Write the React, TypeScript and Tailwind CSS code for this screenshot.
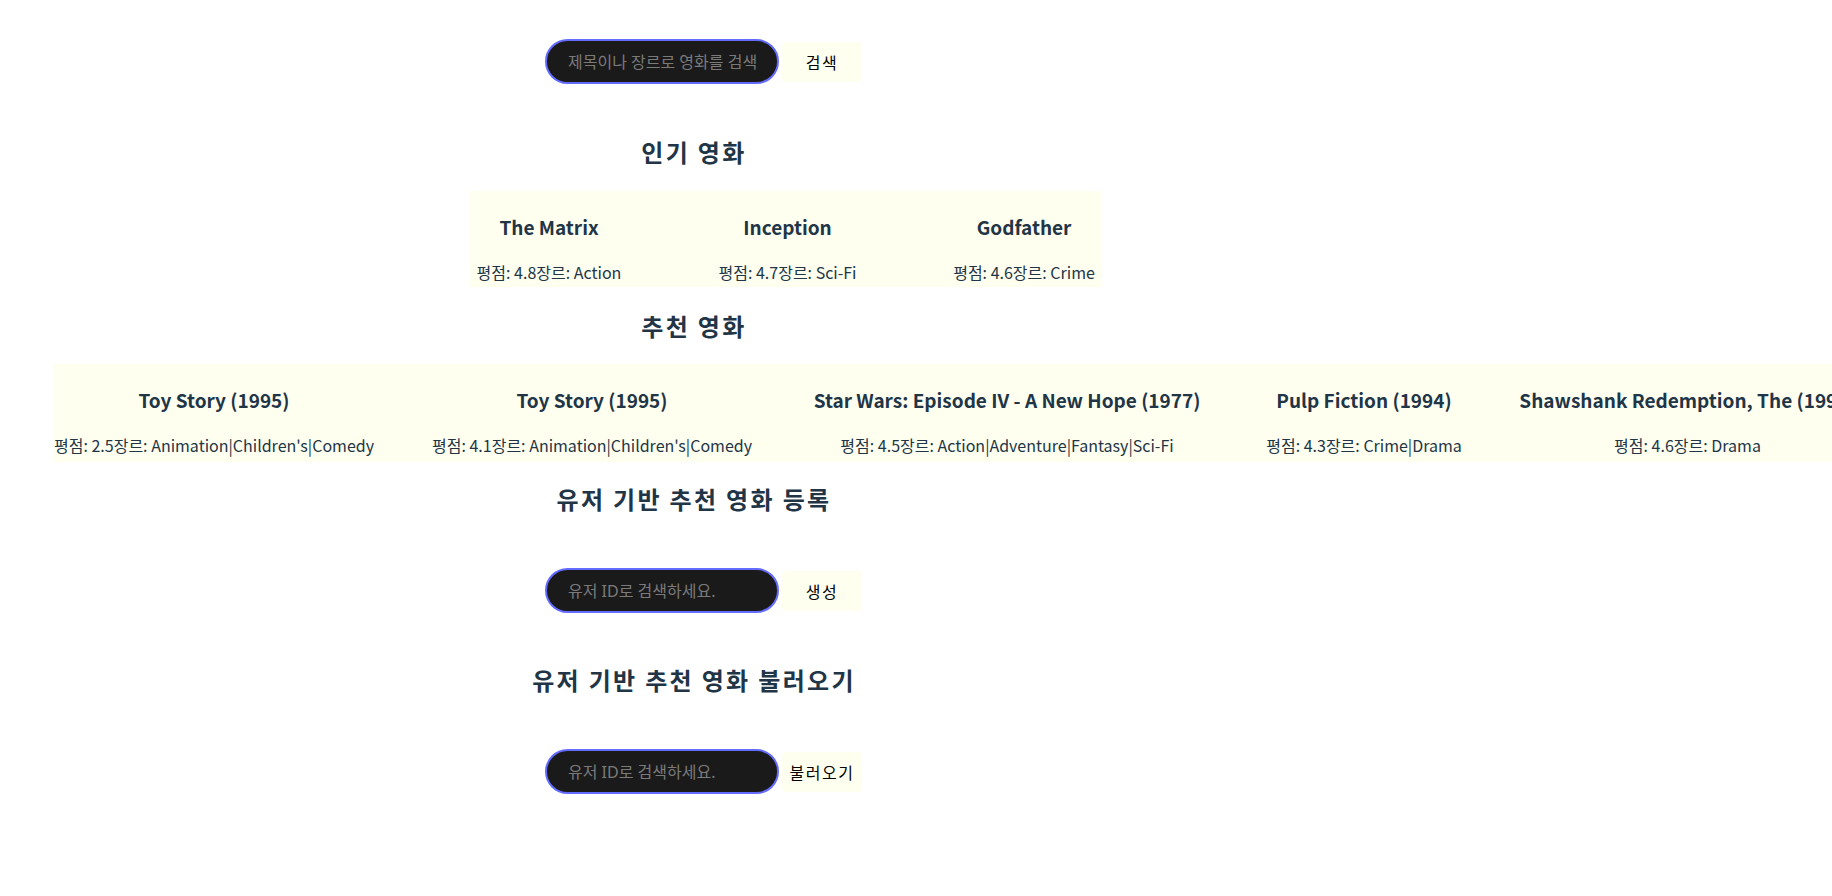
import React from "react";

const cardFont = { fontFamily: '"Noto Sans CJK KR", "Noto Sans", sans-serif' };

type Movie = { title: string; rating: string; genre: string; w: number };

const popular: Movie[] = [
  { title: "The Matrix", rating: "4.8", genre: "Action", w: 148 },
  { title: "Inception", rating: "4.7", genre: "Sci-Fi", w: 141 },
  { title: "Godfather", rating: "4.6", genre: "Crime", w: 144 },
];

const recommended: Movie[] = [
  { title: "Toy Story (1995)", rating: "2.5", genre: "Animation|Children's|Comedy", w: 314 },
  { title: "Toy Story (1995)", rating: "4.1", genre: "Animation|Children's|Comedy", w: 312 },
  { title: "Star Wars: Episode IV - A New Hope (1977)", rating: "4.5", genre: "Action|Adventure|Fantasy|Sci-Fi", w: 388 },
  { title: "Pulp Fiction (1994)", rating: "4.3", genre: "Crime|Drama", w: 196 },
  { title: "Shawshank Redemption, The (1994)", rating: "4.6", genre: "Drama", w: 321 },
];

function Card({ m }: { m: Movie }) {
  return (
    <div className="flex shrink-0 flex-col items-center" style={{ width: m.w }}>
      <div className="h-[24px] whitespace-nowrap text-[19px] font-bold leading-[24px]">{m.title}</div>
      <div className="mt-[23px] h-[20px] whitespace-nowrap text-[16px] leading-[20px]">
        <span>평점: {m.rating}</span>
        <span>장르: {m.genre}</span>
      </div>
    </div>
  );
}

function Heading({ children, className }: { children: React.ReactNode; className: string }) {
  return (
    <h2
      className={"h-[29px] pl-[2px] text-center text-[24px] font-bold leading-[29px] tracking-[2.3px] text-[#213547] " + className}
      style={cardFont}
    >
      {children}
    </h2>
  );
}

function SearchRow({ placeholder, label, className }: { placeholder: string; label: string; className: string }) {
  return (
    <div className={"ml-[492px] flex items-center gap-[3px] " + className}>
      <input
        placeholder={placeholder}
        className="h-[45px] w-[234px] rounded-full border-2 border-[#646cff] bg-[#1a1a1a] px-[21px] text-[16px] text-white outline-none placeholder:text-[#7a7a7a]"
        style={{ fontFamily: '"Noto Sans", "Noto Sans CJK KR", sans-serif' }}
      />
      <button
        className="h-[40px] w-[80px] rounded-[4px] bg-[#fffff0] text-[16px] tracking-[1.5px] text-black"
        style={{ fontFamily: '"Noto Sans CJK KR", "Noto Sans", sans-serif' }}
      >
        {label}
      </button>
    </div>
  );
}

export default function App() {
  return (
    <div className="min-h-screen w-full overflow-hidden bg-white text-[#213547]">
      <div className="ml-[53px] flex w-[1280px] flex-col pb-[40px]">
        <SearchRow className="mt-[39px]" placeholder="제목이나 장르로 영화를 검색" label="검색" />

        <Heading className="mt-[53px]">인기 영화</Heading>

        <div
          className="ml-[417px] mt-[25px] flex h-[96px] w-max gap-[94px] bg-[#fffff0] px-[5px] pt-[24px]"
          style={cardFont}
        >
          {popular.map((m, i) => (
            <Card key={i} m={m} />
          ))}
        </div>

        <Heading className="mt-[24px]">추천 영화</Heading>

        <div
          className="mt-[24px] flex h-[98px] w-max gap-[65px] bg-[#fffff0] pl-[4px] pr-[40px] pt-[24px]"
          style={cardFont}
        >
          {recommended.map((m, i) => (
            <Card key={i} m={m} />
          ))}
        </div>

        <Heading className="mt-[22px]">유저 기반 추천 영화 등록</Heading>

        <SearchRow className="mt-[55px]" placeholder="유저 ID로 검색하세요." label="생성" />

        <Heading className="mt-[52px]">유저 기반 추천 영화 불러오기</Heading>

        <SearchRow className="mt-[55px]" placeholder="유저 ID로 검색하세요." label="불러오기" />
      </div>
    </div>
  );
}
